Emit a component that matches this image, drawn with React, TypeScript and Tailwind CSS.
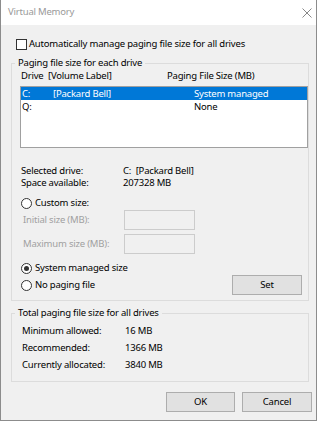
import React from 'react';

const drives = [
    { letter: 'C:', label: '[Packard Bell]', size: 'System managed', selected: true },
    { letter: 'Q:', label: '', size: 'None', selected: false },
];

const totals = [
    { label: 'Minimum allowed:', value: '16 MB' },
    { label: 'Recommended:', value: '1366 MB' },
    { label: 'Currently allocated:', value: '3840 MB' },
];

const Radio = ({ checked }: { checked?: boolean }) => (
    <span className="w-[11px] h-[11px] rounded-full border border-[#333] bg-white flex items-center justify-center shrink-0">
        {checked && <span className="w-[5px] h-[5px] rounded-full bg-[#333]"></span>}
    </span>
);

const Button = ({ label, w }: { label: string; w: string }) => (
    <div className={`${w} h-[20px] bg-[#e1e1e1] border border-[#adadad] flex items-center justify-center`}>{label}</div>
);

export default function App() {
    return (
        <div className="w-[320px] h-[422px] bg-white font-['Noto_Sans',sans-serif] text-[9.5px] tracking-[-0.2px] text-black">
            <div className="w-[317px] h-[421px] border-x border-b border-[#8c8c8c] bg-[#f0f0f0] flex flex-col">
                {/* title bar */}
                <div className="h-[25px] bg-white flex items-center justify-between pl-[7px] pr-[4px] shrink-0">
                    <span className="text-[9.5px] text-[#999]">Virtual Memory</span>
                    <svg width="10" height="10" viewBox="0 0 10 10" className="stroke-[#888]">
                        <path d="M0.5 0.5L9.5 9.5M9.5 0.5L0.5 9.5" strokeWidth="1" />
                    </svg>
                </div>

                <div className="pl-[10px] flex flex-col">
                    <div className="mt-[12px] h-[14px] flex items-center gap-[2px] pl-[5px]">
                        <span className="w-[11px] h-[11px] border border-[#333] bg-white"></span>
                        <span className="leading-[14px]">Automatically manage paging file size for all drives</span>
                    </div>

                    {/* per drive group */}
                    <fieldset className="mt-[5px] w-[298px] border border-[#dcdcdc] pb-[5px]">
                        <legend className="ml-[3px] px-[3px] leading-[14px]">Paging file size for each drive</legend>
                        <div className="flex leading-[12px] pl-[9px]">
                            <span className="w-[27px]">Drive</span>
                            <span className="w-[119px]">[Volume Label]</span>
                            <span>Paging File Size (MB)</span>
                        </div>
                        <div className="mt-[4px] ml-[8px] h-[62px] border border-[#a0a0a0] bg-white">
                            {drives.map((d) => (
                                <div
                                    key={d.letter}
                                    className={`h-[13px] flex items-center leading-[13px] pl-[1px] ${d.selected ? 'bg-[#0078d7] text-white' : ''}`}
                                >
                                    <span className="w-[31px]">{d.letter}</span>
                                    <span className="w-[141px]">{d.label}</span>
                                    <span>{d.size}</span>
                                </div>
                            ))}
                        </div>

                        <div className="mt-[17px] pl-[9px] leading-[12px]">
                            <div className="flex"><span className="w-[102px]">Selected drive:</span><span>C:&nbsp;&nbsp;[Packard Bell]</span></div>
                            <div className="flex"><span className="w-[102px]">Space available:</span><span>207328 MB</span></div>
                        </div>

                        <div className="mt-[7px] h-[14px] pl-[9px] flex items-center gap-[3px]">
                            <Radio />
                            <span>Custom size:</span>
                        </div>
                        <div className="h-[20px] pl-[11px] flex items-center">
                            <span className="w-[101px] text-[#a0a0a0]">Initial size (MB):</span>
                            <span className="w-[71px] h-[20px] border border-[#cccccc] bg-[#f0f0f0]"></span>
                        </div>
                        <div className="mt-[4px] h-[20px] pl-[11px] flex items-center">
                            <span className="w-[101px] text-[#a0a0a0]">Maximum size (MB):</span>
                            <span className="w-[71px] h-[20px] border border-[#cccccc] bg-[#f0f0f0]"></span>
                        </div>

                        <div className="mt-[7px] h-[14px] pl-[9px] flex items-center gap-[3px]">
                            <Radio checked />
                            <span>System managed size</span>
                        </div>
                        <div className="h-[20px] pl-[9px] pr-[6px] flex items-center justify-between">
                            <div className="flex items-center gap-[3px]">
                                <Radio />
                                <span>No paging file</span>
                            </div>
                            <Button label="Set" w="w-[70px]" />
                        </div>
                    </fieldset>

                    {/* totals group */}
                    <fieldset className="mt-[5px] w-[298px] border border-[#dcdcdc] pb-[8px]">
                        <legend className="ml-[3px] px-[3px] leading-[14px]">Total paging file size for all drives</legend>
                        <div className="mt-[3px] pl-[10px] flex flex-col gap-[1px]">
                            {totals.map((t) => (
                                <div key={t.label} className="flex leading-[16px]">
                                    <span className="w-[103px]">{t.label}</span>
                                    <span>{t.value}</span>
                                </div>
                            ))}
                        </div>
                    </fieldset>

                    <div className="mt-[10px] flex justify-end gap-[7px] pr-[4px]">
                        <Button label="OK" w="w-[69px]" />
                        <Button label="Cancel" w="w-[70px]" />
                    </div>
                </div>
            </div>
        </div>
    );
}
